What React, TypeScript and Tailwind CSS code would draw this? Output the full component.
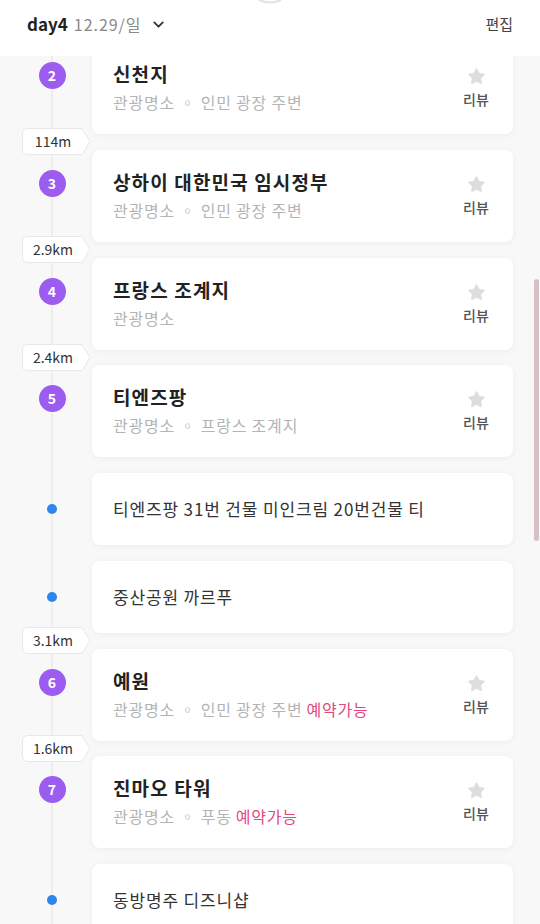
import { Star, ChevronDown } from "lucide-react";

type Place = {
  kind: "place";
  no: number;
  title: string;
  sub: string;
  booking?: boolean;
};

type Memo = {
  kind: "memo";
  text: string;
};

type Row = { item: Place | Memo; distance?: string };

const rows: Row[] = [
  { item: { kind: "place", no: 2, title: "신천지", sub: "관광명소 ◦ 인민 광장 주변" }, distance: "114m" },
  { item: { kind: "place", no: 3, title: "상하이 대한민국 임시정부", sub: "관광명소 ◦ 인민 광장 주변" }, distance: "2.9km" },
  { item: { kind: "place", no: 4, title: "프랑스 조계지", sub: "관광명소" }, distance: "2.4km" },
  { item: { kind: "place", no: 5, title: "티엔즈팡", sub: "관광명소 ◦ 프랑스 조계지" } },
  { item: { kind: "memo", text: "티엔즈팡 31번 건물 미인크림 20번건물 티" } },
  { item: { kind: "memo", text: "중산공원 까르푸" }, distance: "3.1km" },
  { item: { kind: "place", no: 6, title: "예원", sub: "관광명소 ◦ 인민 광장 주변", booking: true }, distance: "1.6km" },
  { item: { kind: "place", no: 7, title: "진마오 타워", sub: "관광명소 ◦ 푸동", booking: true } },
  { item: { kind: "memo", text: "동방명주 디즈니샵" } },
];

const DistanceBadge = ({ label }: { label: string }) => (
  <div className="relative ml-[22px] h-[27px] w-[69px] shrink-0">
    <svg className="absolute inset-0" width="69" height="27" viewBox="0 0 69 27">
      <path
        d="M6 0.5 H60 L68 13.5 L60 26.5 H6 Q0.5 26.5 0.5 21 V6 Q0.5 0.5 6 0.5 Z"
        fill="#ffffff"
        stroke="#e8e8e8"
      />
    </svg>
    <span className="relative flex h-full w-[62px] items-center justify-center text-[14px] text-[#333]">
      {label}
    </span>
  </div>
);

const PlaceCard = ({ place }: { place: Place }) => (
  <div className="flex h-[92px] items-stretch">
    <div className="flex w-[92px] shrink-0 pl-[38.5px] pt-[20px]">
      <div className="relative flex h-[27px] w-[27px] items-center justify-center rounded-full bg-[#9d5cf0] text-[14px] font-bold text-white">
        {place.no}
      </div>
    </div>
    <div className="flex flex-1 rounded-[8px] bg-white pl-[21px] pr-[22px] pt-[19px] shadow-[0_1px_6px_rgba(0,0,0,0.05)]">
      <div className="flex-1">
        <div className="text-[19px] font-bold leading-[25px] tracking-[0.06em] text-[#222]">{place.title}</div>
        <div className="mt-[6px] text-[16px] leading-[21px] tracking-[0.05em] text-[#b4b4b4]">
          {place.sub}
          {place.booking && <span className="ml-[4px] text-[#e4487f]">예약가능</span>}
        </div>
      </div>
      <div className="flex w-[30px] flex-col items-center pt-[6px]">
        <Star size={19} fill="#dddddd" stroke="#dddddd" strokeWidth={1} />
        <span className="mt-[4px] text-[14px] font-medium leading-[18px] text-[#555]">리뷰</span>
      </div>
    </div>
  </div>
);

const MemoCard = ({ memo }: { memo: Memo }) => (
  <div className="flex h-[72px] items-stretch">
    <div className="flex w-[92px] shrink-0 items-center pl-[47px]">
      <div className="relative h-[10px] w-[10px] rounded-full bg-[#2e86ec]" />
    </div>
    <div className="flex flex-1 items-center rounded-[8px] bg-white pl-[21px] text-[17px] tracking-[0.05em] text-[#333] shadow-[0_1px_6px_rgba(0,0,0,0.05)]">
      {memo.text}
    </div>
  </div>
);

const App = () => {
  return (
    <div
      className="relative flex h-[924px] w-[540px] flex-col overflow-hidden bg-[#f8f8f8]"
      style={{ fontFamily: '"Noto Sans CJK KR", "Noto Sans", sans-serif' }}
    >
      <div className="relative z-10 flex h-[56px] shrink-0 items-center justify-between bg-white px-[27px] pb-[8px]">
        <svg className="absolute left-[258px] top-0" width="24" height="4" viewBox="0 0 24 4">
          <path d="M1 0 Q12 5 23 0" fill="none" stroke="#e2e2e2" strokeWidth="2" />
        </svg>
        <div className="flex items-center">
          <span className="text-[17px] font-bold text-[#222]">day4</span>
          <span className="ml-[6px] text-[16px] tracking-[0.06em] text-[#8a8a8a]">12.29/일</span>
          <ChevronDown size={17} strokeWidth={2.5} className="ml-[9px] text-[#333]" />
        </div>
        <span className="text-[15px] text-[#444]">편집</span>
      </div>

      <div className="relative flex-1 overflow-hidden">
        <div className="absolute bottom-0 left-[51px] top-0 w-[2px] bg-[#eeeeee]" />
        <div className="relative mr-[27px] mt-[-14px] flex flex-col">
          {rows.map((row, i) => (
            <div key={i} className="flex flex-col">
              {row.item.kind === "place" ? (
                <PlaceCard place={row.item} />
              ) : (
                <MemoCard memo={row.item} />
              )}
              <div className="flex h-[15.75px] items-center">
                {row.distance && <DistanceBadge label={row.distance} />}
              </div>
            </div>
          ))}
        </div>
      </div>

      <div className="absolute right-[1px] top-[279px] h-[262px] w-[5px] rounded-full bg-[#d6c2c5]" />
    </div>
  );
};

export default App;
